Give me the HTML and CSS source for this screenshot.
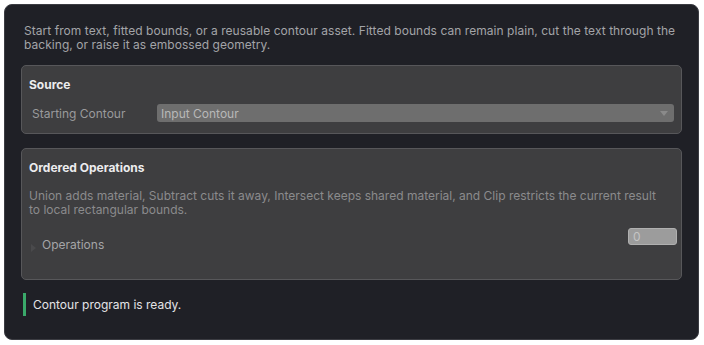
FILE: index.html
```html
<!DOCTYPE html>
<html>
<head>
<meta charset="utf-8">
<link rel="stylesheet" href="styles.css">
</head>
<body>
<div class="panel">
  <p class="intro">Start from text, fitted bounds, or a reusable contour asset. Fitted bounds can remain plain, cut the text through the backing, or raise it as embossed geometry.</p>
  <section class="box source">
    <h3 class="box-title">Source</h3>
    <div class="field">
      <span class="field-label">Starting Contour</span>
      <div class="select">
        <span>Input Contour</span>
        <span class="caret"></span>
      </div>
    </div>
  </section>
  <section class="box ops">
    <h3 class="box-title">Ordered Operations</h3>
    <p class="desc">Union adds material, Subtract cuts it away, Intersect keeps shared material, and Clip restricts the current result to local rectangular bounds.</p>
    <div class="ops-row">
      <span class="tri"></span>
      <span class="ops-label">Operations</span>
      <div class="num">0</div>
    </div>
  </section>
  <div class="status">Contour program is ready.</div>
</div>
</body>
</html>
```
FILE: styles.css
```css
html, body {
  margin: 0;
  background: #ffffff;
}
body {
  padding: 4px;
  font-family: Inter, "Noto Sans", sans-serif;
  font-size: 12px;
}
.panel {
  width: 695px;
  height: 336px;
  box-sizing: border-box;
  background: #1f2026;
  border: 1px solid #3b3c42;
  border-radius: 8px;
  padding: 17px 16px 16px;
  display: flex;
  flex-direction: column;
}
.intro {
  margin: 2px 3px 0;
  color: #a3a4a8;
  line-height: 14px;
  letter-spacing: 0.05px;
}
.box {
  background: #3e3e40;
  border: 1px solid #57575a;
  border-radius: 5px;
  padding: 0 7px;
  box-sizing: border-box;
}
.source {
  margin-top: 13px;
  height: 69px;
}
.box-title {
  margin: 0;
  font-size: 12px;
  font-weight: 700;
  color: #ececee;
  line-height: 16px;
  padding-top: 11px;
}
.field {
  display: flex;
  align-items: center;
  margin-top: 11px;
}
.field-label {
  width: 125px;
  padding-left: 3px;
  color: #9a9a9c;
}
.select {
  flex: 1;
  height: 18px;
  background: #6e6e6e;
  border-radius: 3px;
  display: flex;
  align-items: center;
  justify-content: space-between;
  padding: 0 6px 0 4px;
  color: #b8b8b8;
}
.caret {
  width: 0;
  height: 0;
  border-left: 4px solid transparent;
  border-right: 4px solid transparent;
  border-top: 5px solid #8a8a8a;
}
.ops {
  margin-top: 14px;
  height: 132px;
}
.desc {
  margin: 13px 0 0;
  padding-right: 8px;
  color: #8b8b8d;
  line-height: 14px;
}
.ops-row {
  display: flex;
  align-items: flex-start;
  margin-top: 11px;
  height: 17px;
}
.tri {
  width: 0;
  height: 0;
  border-top: 4px solid transparent;
  border-bottom: 4px solid transparent;
  border-left: 5px solid #4a4a4c;
  margin-left: 2px;
  margin-top: 16px;
}
.ops-label {
  margin-left: 6px;
  color: #a5a5a7;
  line-height: 14px;
  margin-top: 10px;
}
.num {
  margin-left: auto;
  width: 49px;
  height: 17px;
  box-sizing: border-box;
  background: #9c9c9c;
  border: 1px solid #b0b0b0;
  border-radius: 3px;
  color: #c4c4c4;
  padding-left: 4px;
  line-height: 15px;
  margin-right: -3px;
}
.status {
  margin-top: 13px;
  margin-left: 2px;
  border-left: 3px solid #3aa96a;
  padding-left: 7px;
  height: 23px;
  line-height: 23px;
  color: #e4e4e6;
}
```
